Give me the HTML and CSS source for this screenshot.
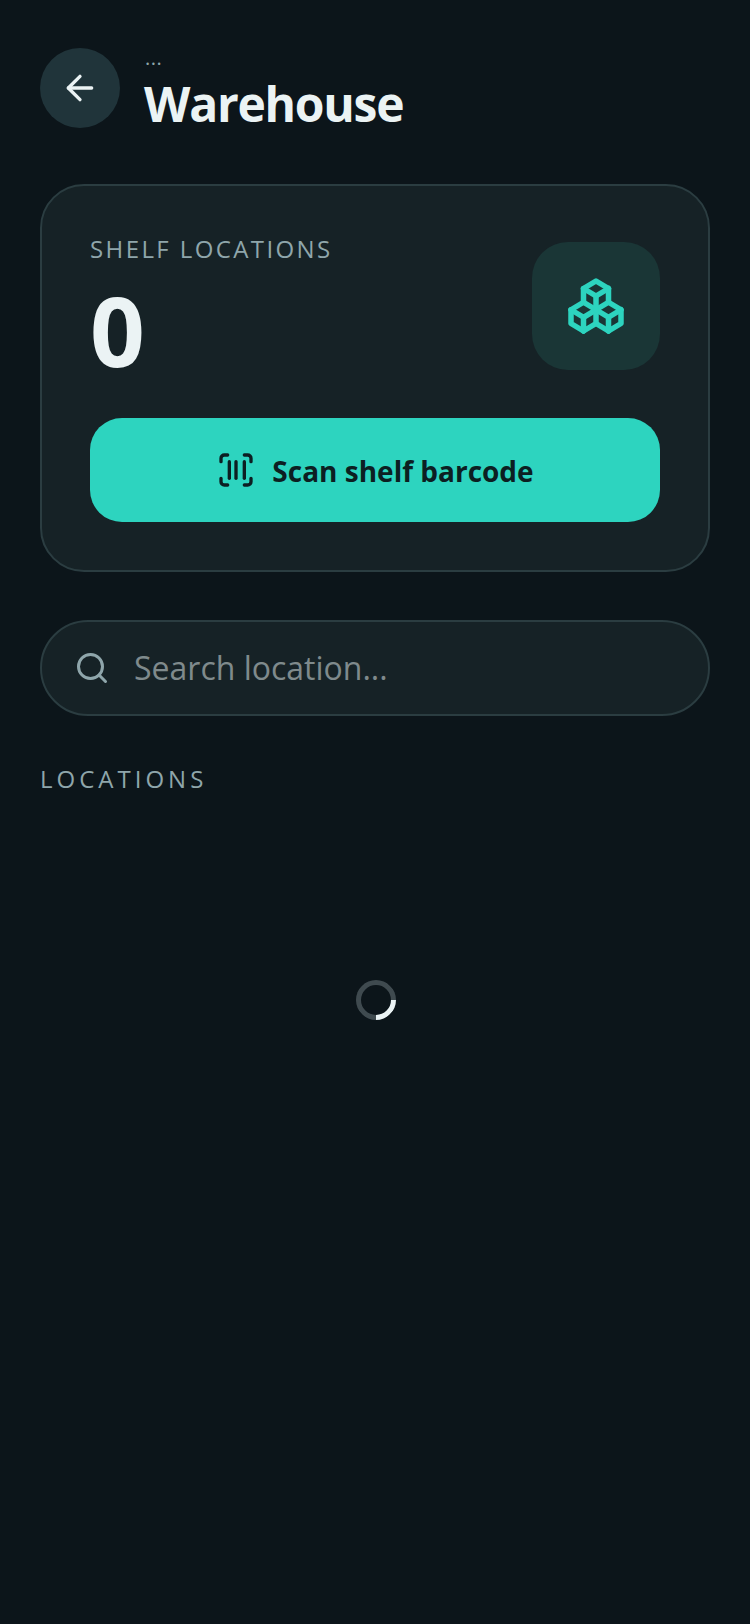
FILE: index.html
```html
<!DOCTYPE html>
<html lang="en">
<head>
<meta charset="utf-8">
<title>Warehouse</title>
<link rel="stylesheet" href="styles.css">
</head>
<body>
<main class="page">
  <header class="header">
    <button class="back" aria-label="Back">
      <svg width="40" height="40" viewBox="0 0 24 24" fill="none" stroke="currentColor" stroke-width="2" stroke-linecap="round" stroke-linejoin="round"><path d="m12 19-7-7 7-7"/><path d="M19 12H5"/></svg>
    </button>
    <div class="titles">
      <div class="eyebrow">...</div>
      <h1 class="title">Warehouse</h1>
    </div>
  </header>

  <section class="card">
    <div class="stat">
      <div>
        <div class="stat-label">SHELF LOCATIONS</div>
        <div class="stat-value">0</div>
      </div>
      <div class="stat-icon">
        <svg width="60" height="60" viewBox="0 0 24 24" fill="none" stroke="currentColor" stroke-width="2.2" stroke-linecap="round" stroke-linejoin="round"><path d="M7 16.5l-5 -3l5 -3l5 3v5.5l-5 3z"/><path d="M2 13.5v5.5l5 3"/><path d="M7 16.545l5 -3.03"/><path d="M17 16.5l-5 -3l5 -3l5 3v5.5l-5 3z"/><path d="M12 19l5 3"/><path d="M17 16.5l5 -3"/><path d="M12 13.5v-5.5l-5 -3l5 -3l5 3v5.5"/><path d="M7 5.03v5.455"/><path d="M12 8l5 -3"/></svg>
      </div>
    </div>
    <button class="scan">
      <svg width="40" height="40" viewBox="0 0 24 24" fill="none" stroke="currentColor" stroke-width="2" stroke-linecap="round" stroke-linejoin="round"><path d="M3 7V5a2 2 0 0 1 2-2h2"/><path d="M17 3h2a2 2 0 0 1 2 2v2"/><path d="M21 17v2a2 2 0 0 1-2 2h-2"/><path d="M7 21H5a2 2 0 0 1-2-2v-2"/><path d="M8 7v10"/><path d="M12 7v10"/><path d="M17 7v10"/></svg>
      <span class="scan-text">Scan shelf barcode</span>
    </button>
  </section>

  <label class="search">
    <svg class="search-icon" width="36" height="36" viewBox="0 0 24 24" fill="none" stroke="currentColor" stroke-width="2" stroke-linecap="round" stroke-linejoin="round"><circle cx="11" cy="11" r="8"/><path d="m21 21-4.3-4.3"/></svg>
    <span class="placeholder">Search location...</span>
  </label>

  <h2 class="section-label">LOCATIONS</h2>

  <div class="loading"><div class="spinner"></div></div>
</main>
</body>
</html>
```
FILE: styles.css
```css
* { box-sizing: border-box; }
html, body { margin: 0; padding: 0; }
body {
  background: #0c151a;
  font-family: "Open Sans", "Noto Sans", sans-serif;
  color: #ebf3f4;
  min-height: 1624px;
}
.page { padding: 48px 40px 0; }
.header { display: flex; align-items: center; gap: 24px; height: 80px; }
.back {
  width: 80px; height: 80px; flex: none;
  border: 0; border-radius: 50%; padding: 0;
  background: #20343a; color: #ebf3f4;
  display: flex; align-items: center; justify-content: center;
}
.titles { display: flex; flex-direction: column; gap: 8px; padding-top: 4px; }
.eyebrow {
  font-size: 20px; line-height: 20px; color: #8fa6ab;
  letter-spacing: 0.5px; padding-left: 1px;
}
.title {
  margin: 0; font-size: 48px; line-height: 56px; font-weight: 700;
  letter-spacing: -1.25px; color: #ebf3f4;
}
.card {
  margin-top: 56px; height: 388px; padding: 46px 48px 48px;
  background: #162226; border: 2px solid #2b3d41; border-radius: 44px;
  display: flex; flex-direction: column; justify-content: space-between;
}
.stat { display: flex; justify-content: space-between; align-items: flex-start; padding-top: 10px; }
.stat-label {
  font-size: 24px; line-height: 32px; letter-spacing: 2.4px; color: #8fa6ab;
  margin-top: -9px;
}
.stat-value {
  font-size: 96px; line-height: 112px; font-weight: 700; color: #ebf3f4;
  margin-top: 9px;
}
.stat-icon {
  width: 128px; height: 128px; border-radius: 36px;
  background: #1a3636; color: #2dd4bf;
  display: flex; align-items: center; justify-content: center;
}
.scan {
  height: 104px; width: 100%;
  border: 0; border-radius: 32px; background: #2dd4bf; color: #0c1f22;
  font-family: inherit; font-size: 28px; font-weight: 700;
  display: flex; align-items: center; justify-content: center; gap: 16px;
}
.scan-text { padding-top: 2px; }
.search {
  margin-top: 48px; height: 96px; padding: 0 32px;
  background: #162226; border: 2px solid #2b3d41; border-radius: 48px;
  display: flex; align-items: center; gap: 24px;
}
.search-icon { color: #8fa6ab; flex: none; }
.placeholder { font-size: 32px; color: #7f8a8c; padding-bottom: 2px; }
.section-label {
  margin: 47px 0 0; font-size: 24px; line-height: 32px; font-weight: 400;
  letter-spacing: 4px; color: #8fa6ab;
}
.loading { display: flex; justify-content: center; padding: 185px 0 0 2px; }
.spinner {
  width: 40px; height: 40px; border-radius: 50%;
  border: 5px solid #3f4a4f;
  border-right-color: #ebf3f4;
  transform: rotate(45deg);
}
```
